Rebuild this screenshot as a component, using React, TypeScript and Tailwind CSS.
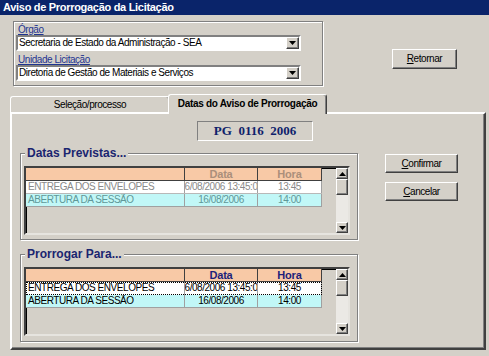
const raised =
  "border border-t-white border-l-white border-r-[#404040] border-b-[#404040] shadow-[inset_-1px_-1px_0_#808080]";
const sunken =
  "border-2 border-t-[#808080] border-l-[#808080] border-r-white border-b-white";
const etched = "border border-[#808080] shadow-[inset_1px_1px_0_#fff,1px_1px_0_#fff]";

function Arrow({ up = false }: { up?: boolean }) {
  return (
    <svg width="7" height="4" viewBox="0 0 7 4" className={up ? "rotate-180" : ""}>
      <path d="M0 0h7L3.5 4z" fill="#000" />
    </svg>
  );
}

function Combo({ text }: { text: string }) {
  return (
    <div className={`${sunken} bg-white w-[285px] h-[16px] flex items-center`}>
      <span className="flex-1 pl-[1px] leading-[12px] whitespace-nowrap overflow-hidden">{text}</span>
      <div className={`${raised} bg-[#d4d0c8] w-[13px] h-[12px] flex items-center justify-center`}>
        <Arrow />
      </div>
    </div>
  );
}

function Button({ children }: { children: React.ReactNode }) {
  return (
    <div className={`${raised} bg-[#d4d0c8] flex items-center justify-center w-[73px] h-[19px] leading-[12px]`}>
      {children}
    </div>
  );
}

function Scrollbar() {
  return (
    <div className="w-[12px] h-full flex flex-col">
      <div className={`${raised} bg-[#d4d0c8] h-[11px] flex items-center justify-center`}>
        <Arrow up />
      </div>
      <div className={`${raised} bg-[#d4d0c8] h-[16px]`} />
      <div className="flex-1 bg-[#ebe9e5]" />
      <div className={`${raised} bg-[#d4d0c8] h-[11px] flex items-center justify-center`}>
        <Arrow />
      </div>
    </div>
  );
}

type Tone = "disabled" | "active";

function Grid({ tone }: { tone: Tone }) {
  const dim = tone === "disabled";
  const head = dim ? "text-[#ab8f7b]" : "text-[#1d1f7a]";
  const row1 = dim ? "text-[#8a8a8a]" : "text-black";
  const row2 = dim ? "text-[#5f9898]" : "text-black";
  const cols = "grid grid-cols-[159px_73px_64px]";
  return (
    <div className="ml-[3px] mt-[12px] w-[326px] h-[69px] border-2 border-t-[#404040] border-l-[#404040] border-r-[#e6e4df] border-b-[#e6e4df] shadow-[inset_1px_1px_0_#000] flex">
      <div className="w-[296px] flex flex-col">
        <div className={`${cols} h-[13px] bg-[#f8c9a6] border-b border-[#404040] font-bold text-[11px] tracking-[-0.2px] leading-[12px] ${head}`}>
          <div className="border-r border-[#404040]" />
          <div className="border-r border-[#404040] text-center">Data</div>
          <div className="border-r border-[#404040] text-center">Hora</div>
        </div>
        <div
          className={`${cols} h-[13px] bg-white leading-[12px] ${row1} ${
            dim ? "border-b border-[#b8b8b8]" : "outline outline-1 outline-dotted outline-black -outline-offset-1"
          }`}
        >
          <div className="pl-[2px] border-r border-[#a0a0a0] whitespace-nowrap overflow-hidden">ENTREGA DOS ENVELOPES</div>
          <div className="border-r border-[#a0a0a0] flex justify-center whitespace-nowrap overflow-hidden">
            <span className="shrink-0">16/08/2006 13:45:00</span>
          </div>
          <div className="border-r border-[#a0a0a0] text-center">13:45</div>
        </div>
        <div className={`${cols} h-[13px] bg-[#c1f7f7] border-b border-[#a0a0a0] leading-[12px] ${row2}`}>
          <div className="pl-[2px] border-r border-[#a0a0a0] whitespace-nowrap overflow-hidden">ABERTURA DA SESSÃO</div>
          <div className="border-r border-[#a0a0a0] text-center">16/08/2006</div>
          <div className="border-r border-[#a0a0a0] text-center">14:00</div>
        </div>
      </div>
      <div className="flex-1" />
      <Scrollbar />
    </div>
  );
}

function GroupBox({ title, tone, className }: { title: string; tone: Tone; className: string }) {
  return (
    <div className={`relative w-[338px] ${etched} ${className}`}>
      <span className="absolute left-[4px] top-[-8px] px-[2px] bg-[#d4d0c8] font-bold text-[12px] tracking-normal leading-[14px] text-[#1a2570]">
        {title}
      </span>
      <Grid tone={tone} />
    </div>
  );
}

export default function App() {
  return (
    <div className="w-[489px] h-[356px] overflow-hidden bg-[#d4d0c8] text-black text-[10px] tracking-[-0.45px] font-['Liberation_Sans',Arial,sans-serif]">
      <div className="h-[15px] bg-[#0a246a] pl-[3px] text-white font-bold text-[11px] tracking-[-0.3px] leading-[15px]">
        Aviso de Prorrogação da Licitação
      </div>

      <div className="flex items-start pl-[13px] pt-[6px]">
        <div className={`${etched} w-[310px] h-[65px] pl-[2px]`}>
          <div className="h-[13px] flex items-end pl-[2px] leading-[11px] text-[#1f3591] underline">Órgão</div>
          <Combo text="Secretaria de Estado da Administração - SEA" />
          <div className="h-[14px] flex items-end pl-[2px] leading-[11px] text-[#1f3591] underline">Unidade Licitação</div>
          <Combo text="Diretoria de Gestão de Materiais e Serviços" />
        </div>
        <div className="ml-[69px] mt-[28px]">
          <div className={`${raised} bg-[#d4d0c8] flex items-center justify-center w-[65px] h-[20px] leading-[12px]`}>
            <span>
              <span className="underline">R</span>etornar
            </span>
          </div>
        </div>
      </div>

      <div className="flex items-end ml-[10px] mt-[8px] h-[18px]">
        <div className="w-[160px] h-[16px] rounded-t-[3px] border-t border-l border-white border-r border-r-[#404040] shadow-[inset_-1px_0_0_#808080] flex items-center justify-center leading-[12px]">
          Seleção/processo
        </div>
        <div className="relative z-10 -ml-[2px] -mb-[2px] w-[159px] h-[20px] bg-[#d4d0c8] rounded-t-[3px] border-t border-l border-white border-r border-r-[#404040] shadow-[inset_-1px_0_0_#808080] flex items-start justify-center pt-[3px] font-bold whitespace-nowrap tracking-[-0.3px] leading-[12px]">
          Datas do Aviso de Prorrogação
        </div>
      </div>

      <div className="ml-[10px] w-[476px] h-[238px] border-2 border-t-white border-l-white border-r-[#404040] border-b-[#404040] shadow-[inset_-1px_-1px_0_#808080]">
        <div className="ml-[185px] mt-[7px] w-[116px] h-[20px] border border-t-[#808080] border-l-[#808080] border-r-white border-b-white flex items-center justify-center font-['Liberation_Serif','Times_New_Roman',serif] font-bold text-[13px] tracking-normal text-[#0f1f6b] whitespace-pre">
          PG  0116  2006
        </div>
        <div className="flex items-start">
          <div className="ml-[8px] flex flex-col">
            <GroupBox title="Datas Previstas..." tone="disabled" className="mt-[12px] h-[87px]" />
            <GroupBox title="Prorrogar Para..." tone="active" className="mt-[14px] h-[88px]" />
          </div>
          <div className="ml-[27px] mt-[13px] flex flex-col gap-[9px]">
            <Button>
              <span>
                <span className="underline">C</span>onfirmar
              </span>
            </Button>
            <Button>
              <span>
                <span className="underline">C</span>ancelar
              </span>
            </Button>
          </div>
        </div>
      </div>
    </div>
  );
}
